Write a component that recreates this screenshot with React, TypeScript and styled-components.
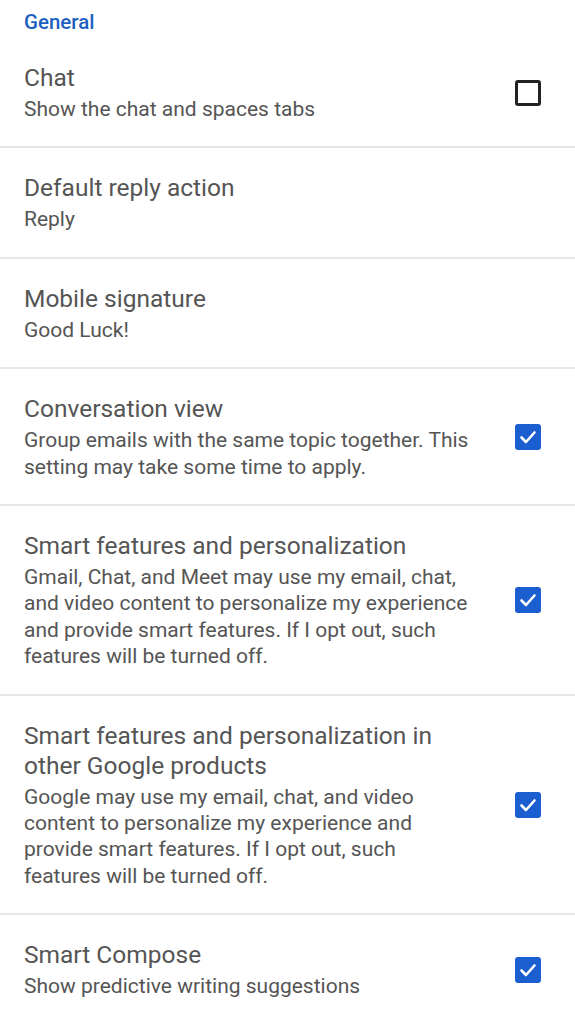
import styled, { createGlobalStyle } from 'styled-components';

const GlobalStyle = createGlobalStyle`
  body {
    margin: 0;
    background: #ffffff;
    font-family: Roboto, "Liberation Sans", sans-serif;
  }
`;

const Page = styled.div`
  display: flex;
  flex-direction: column;
  width: 575px;
`;

const SectionHeader = styled.div`
  padding: 8px 24px 2px;
  font-size: 20.5px;
  line-height: 28px;
  font-weight: 500;
  color: #1d5fc0;
`;

const Row = styled.div`
  display: flex;
  align-items: center;
  padding: 25px 34px 24px 24px;
  border-bottom: 2px solid #e6e6e6;
`;

const TextCol = styled.div`
  display: flex;
  flex-direction: column;
  width: 450px;
  margin-right: auto;
`;

const Title = styled.div`
  font-size: 24.5px;
  line-height: 30px;
  color: #555555;
`;

const Subtitle = styled.div`
  margin-top: 3px;
  font-size: 21px;
  line-height: 26.4px;
  color: #555555;
`;

const Box = styled.div<{ $checked: boolean }>`
  flex: none;
  width: 26px;
  height: 26px;
  box-sizing: border-box;
  border-radius: 3px;
  display: flex;
  align-items: center;
  justify-content: center;
  background: ${(p) => (p.$checked ? '#1b5ed0' : 'transparent')};
  border: ${(p) => (p.$checked ? 'none' : '3px solid #222222')};
`;

function Checkbox({ checked }: { checked: boolean }) {
  return (
    <Box $checked={checked}>
      {checked && (
        <svg width="20" height="20" viewBox="0 0 20 20">
          <path d="M3.5 10.5 L8 15 L16.5 5.5" fill="none" stroke="#ffffff" strokeWidth="2.6" strokeLinecap="round" strokeLinejoin="round" />
        </svg>
      )}
    </Box>
  );
}

type Setting = {
  title: string;
  subtitle: string;
  checked?: boolean;
};

const settings: Setting[] = [
  { title: 'Chat', subtitle: 'Show the chat and spaces tabs', checked: false },
  { title: 'Default reply action', subtitle: 'Reply' },
  { title: 'Mobile signature', subtitle: 'Good Luck!' },
  {
    title: 'Conversation view',
    subtitle: 'Group emails with the same topic together. This setting may take some time to apply.',
    checked: true,
  },
  {
    title: 'Smart features and personalization',
    subtitle:
      'Gmail, Chat, and Meet may use my email, chat, and video content to personalize my experience and provide smart features. If I opt out, such features will be turned off.',
    checked: true,
  },
  {
    title: 'Smart features and personalization in other Google products',
    subtitle:
      'Google may use my email, chat, and video content to personalize my experience and provide smart features. If I opt out, such features will be turned off.',
    checked: true,
  },
  { title: 'Smart Compose', subtitle: 'Show predictive writing suggestions', checked: true },
];

export default function App() {
  return (
    <>
      <GlobalStyle />
      <Page>
        <SectionHeader>General</SectionHeader>
        {settings.map((s) => (
          <Row key={s.title}>
            <TextCol>
              <Title>{s.title}</Title>
              <Subtitle>{s.subtitle}</Subtitle>
            </TextCol>
            {s.checked !== undefined && <Checkbox checked={s.checked} />}
          </Row>
        ))}
      </Page>
    </>
  );
}
